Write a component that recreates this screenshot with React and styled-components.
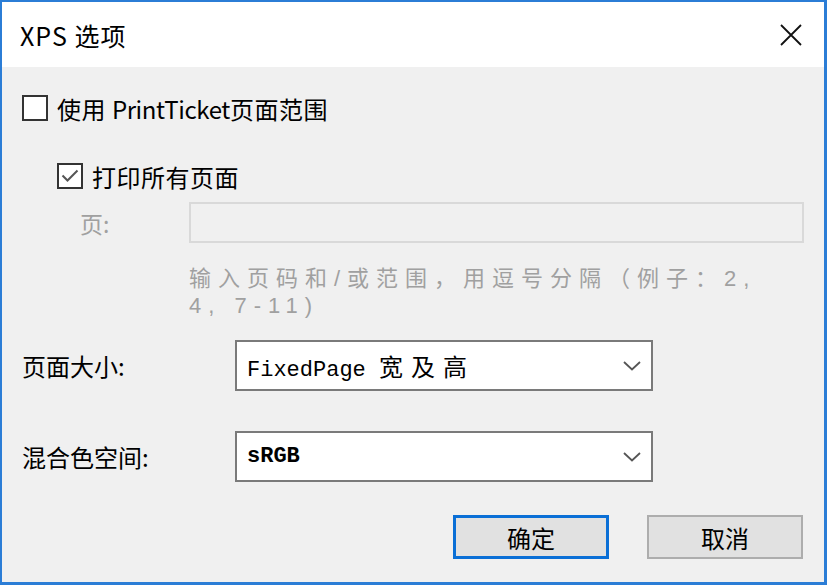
import React from 'react';
import styled, { createGlobalStyle } from 'styled-components';

const GlobalStyle = createGlobalStyle`
  html, body {
    margin: 0;
    padding: 0;
    background: #ffffff;
  }
  body {
    font-family: "Noto Sans CJK SC", "Noto Sans", sans-serif;
  }
`;

const Frame = styled.div`
  width: 827px;
  height: 585px;
  box-sizing: border-box;
  border: 2px solid #2b7dd6;
  border-right-width: 3px;
  border-bottom-width: 3px;
  background: #ffffff;
  display: flex;
  flex-direction: column;
  overflow: hidden;
`;

const TitleBar = styled.div`
  height: 65px;
  flex: none;
  display: flex;
  align-items: center;
  justify-content: space-between;
  padding: 0 20px 0 18px;
  background: #ffffff;
`;

const Title = styled.div`
  font-size: 25px;
  color: #000;
  letter-spacing: 1px;
`;

const CloseButton = styled.div`
  width: 26px;
  height: 26px;
  display: flex;
  align-items: center;
  justify-content: center;
`;

const Body = styled.div`
  flex: 1;
  background: #f0f0f0;
  padding: 27px 20px 0 20px;
  display: flex;
  flex-direction: column;
`;

const CheckRow = styled.label`
  display: flex;
  align-items: center;
  gap: 9px;
  margin-left: ${p => p.$indent || 0}px;
  margin-top: ${p => p.$top || 0}px;
  font-size: 24px;
  color: #000;
  height: 28px;
  letter-spacing: 0.5px;
`;

const Latin = styled.span`
  letter-spacing: -0.4px;
`;

const Box = styled.span`
  width: 26px;
  height: 26px;
  box-sizing: border-box;
  border: 2px solid #333;
  background: #fff;
  display: flex;
  align-items: center;
  justify-content: center;
  flex: none;
`;

const PageRow = styled.div`
  display: flex;
  align-items: center;
  margin-top: 12px;
  margin-left: 58px;
`;

const DimLabel = styled.div`
  width: 109px;
  font-size: 23px;
  color: #a0a0a0;
`;

const DisabledInput = styled.div`
  flex: 1;
  height: 41px;
  box-sizing: border-box;
  border: 2px solid #d9d9d9;
  background: #f0f0f0;
`;

const Hint = styled.div`
  margin-left: 167px;
  margin-top: 22px;
  display: flex;
  flex-direction: column;
`;

const HintLine = styled.div`
  height: 27px;
  line-height: 27px;
  font-family: "Liberation Sans", "Noto Sans CJK SC", sans-serif;
  font-size: 22px;
  color: #a0a0a0;
  letter-spacing: 7px;
  white-space: nowrap;
`;

const FieldRow = styled.div`
  display: flex;
  align-items: center;
  margin-top: ${p => p.$top}px;
`;

const FieldLabel = styled.div`
  width: 213px;
  font-size: 24px;
  color: #000;
`;

const Select = styled.div`
  width: 418px;
  height: 51px;
  box-sizing: border-box;
  border: 2px solid #7a7a7a;
  background: #fff;
  display: flex;
  align-items: center;
  justify-content: space-between;
  padding: 0 10px 0 10px;
`;

const SelectText = styled.div`
  font-family: "Liberation Mono", "Noto Sans CJK SC", monospace;
  font-size: 22px;
  font-weight: ${p => (p.$bold ? 700 : 400)};
  color: #000;
`;

const Wide = styled.span`
  font-size: 24px;
  letter-spacing: 8px;
`;

const Buttons = styled.div`
  display: flex;
  justify-content: flex-end;
  gap: 38px;
  margin-top: 33px;
  padding-right: 1px;
`;

const Button = styled.div`
  width: 156px;
  height: 44px;
  box-sizing: border-box;
  border: ${p => (p.$primary ? '3px solid #0a6fd6' : '2px solid #adadad')};
  background: #e1e1e1;
  display: flex;
  align-items: center;
  justify-content: center;
  font-size: 24px;
  color: #000;
`;

const Chevron = () => (
  <svg width="18" height="10" viewBox="0 0 18 10">
    <path d="M1 1 L9 8.5 L17 1" fill="none" stroke="#555" strokeWidth="1.8" />
  </svg>
);

export default function App() {
  return (
    <>
      <GlobalStyle />
      <Frame>
        <TitleBar>
          <Title>XPS 选项</Title>
          <CloseButton>
            <svg width="22" height="22" viewBox="0 0 22 22">
              <path d="M1 1 L21 21 M21 1 L1 21" stroke="#111" strokeWidth="1.8" />
            </svg>
          </CloseButton>
        </TitleBar>
        <Body>
          <CheckRow>
            <Box />
            <span>
              使用 <Latin>PrintTicket</Latin>页面范围
            </span>
          </CheckRow>
          <CheckRow $indent={35} $top={40}>
            <Box>
              <svg width="18" height="14" viewBox="0 0 18 14">
                <path d="M1.5 6.5 L6.5 11.5 L16.5 1.5" fill="none" stroke="#555" strokeWidth="2" />
              </svg>
            </Box>
            打印所有页面
          </CheckRow>
          <PageRow>
            <DimLabel>页:</DimLabel>
            <DisabledInput />
          </PageRow>
          <Hint>
            <HintLine>输入页码和/或范围，用逗号分隔（例子：2,</HintLine>
            <HintLine>4, 7-11)</HintLine>
          </Hint>
          <FieldRow $top={21}>
            <FieldLabel>页面大小:</FieldLabel>
            <Select>
              <SelectText>
                FixedPage <Wide>宽及高</Wide>
              </SelectText>
              <Chevron />
            </Select>
          </FieldRow>
          <FieldRow $top={40}>
            <FieldLabel>混合色空间:</FieldLabel>
            <Select>
              <SelectText $bold>sRGB</SelectText>
              <Chevron />
            </Select>
          </FieldRow>
          <Buttons>
            <Button $primary>确定</Button>
            <Button>取消</Button>
          </Buttons>
        </Body>
      </Frame>
    </>
  );
}
